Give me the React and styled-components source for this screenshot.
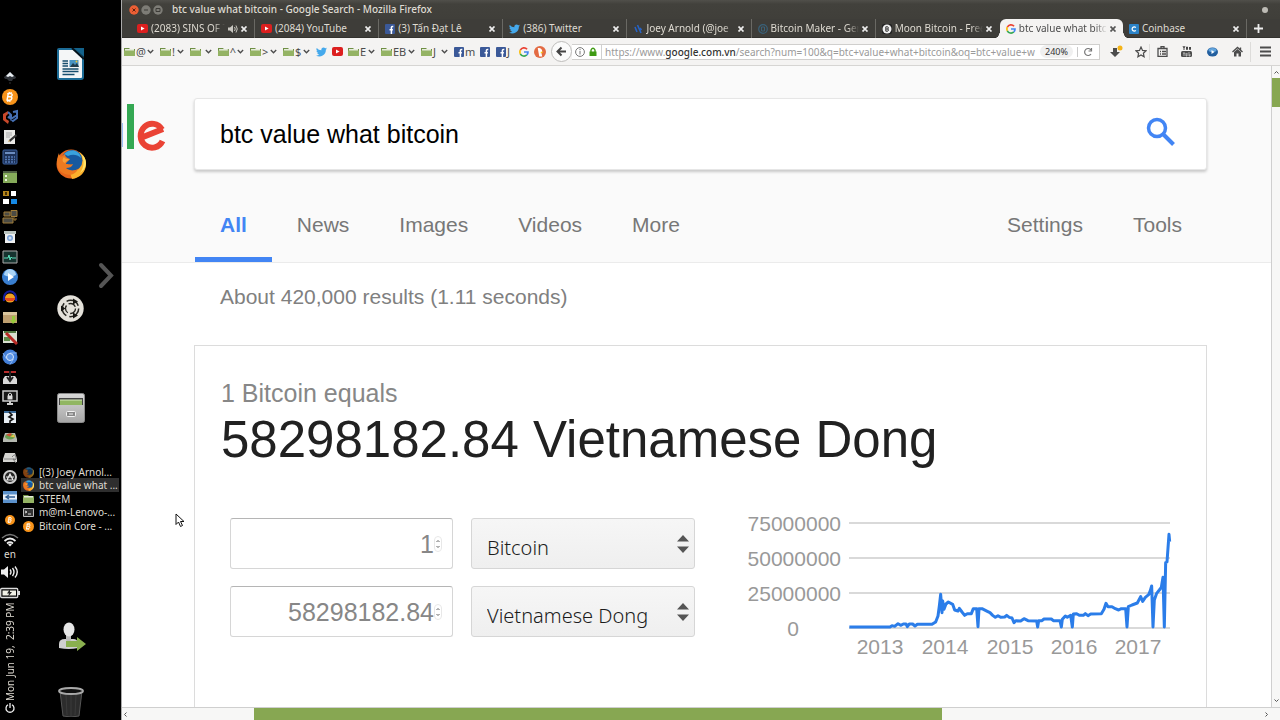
import React from "react";
import styled, { createGlobalStyle, css } from "styled-components";

const GlobalStyle = createGlobalStyle`
  * { box-sizing: border-box; }
  html, body { margin: 0; background: #000; }
  body { font-family: "Liberation Sans", Arial, sans-serif; }
  button { border: 0; background: none; padding: 0; font: inherit; color: inherit; }
  a { color: inherit; text-decoration: none; }
`;

const uiFont = `"Noto Sans", "Open Sans", sans-serif`;

/* ---------- desktop ---------- */

const Desktop = styled.div`
  position: relative;
  display: grid;
  grid-template-columns: 21px 100px minmax(0, 1fr);
  grid-template-rows: minmax(0, 1fr);
  height: 100vh;
  overflow: hidden;
  background: #000;
  color: #dfdbd2;
`;

const Tray = styled.aside`
  display: flex;
  flex-direction: column;
  align-items: flex-start;
  min-height: 0;
  padding-top: 67px;
  font-family: ${uiFont};
  font-size: 10px;
`;

const TrayButton = styled.button`
  flex: none;
  display: flex;
  align-items: center;
  justify-content: center;
  width: 20px;
  height: ${(p) => p.$height || 20}px;
`;

const Clock = styled.time`
  writing-mode: vertical-rl;
  transform: rotate(180deg);
  width: 20px;
  height: 98px;
  text-align: center;
  line-height: 20px;
  white-space: pre;
`;

const Dock = styled.nav`
  display: flex;
  flex-direction: column;
  min-height: 0;
  padding-top: 14px;
`;

const Launcher = styled.button`
  flex: none;
  position: relative;
  display: flex;
  align-items: center;
  justify-content: center;
  width: 99px;
  height: ${(p) => p.$height || 100}px;
  margin-top: ${(p) => p.$above || 0}px;
`;

const DockArrow = styled.svg`
  position: absolute;
  right: 6px;
  top: 4px;
`;

const TaskList = styled.ul`
  list-style: none;
  margin: 7px 2px 71px 0;
  padding: 0;
`;

const Task = styled.li`
  display: flex;
  align-items: center;
  gap: 5px;
  height: 14px;
  margin-bottom: ${(p) => (p.$tight ? -1 : 0)}px;
  padding-left: 2px;
  background: ${(p) => (p.$active ? "#2e2e2e" : "transparent")};
  font: 10px/13px ${uiFont};
  white-space: nowrap;
`;

/* ---------- browser chrome ---------- */

const Browser = styled.main`
  display: flex;
  flex-direction: column;
  min-width: 0;
  min-height: 0;
  border-left: 1px solid #aaa;
  background: #fff;
`;

const TitleBar = styled.header`
  flex: none;
  display: flex;
  align-items: center;
  height: 19px;
  padding: 0 12px 0 7px;
  background: linear-gradient(#504f4a, #42413c 4px, #403f3a);
  color: #dfdbd2;
  font: 10px/19px ${uiFont};
`;

const WindowButtons = styled.div`
  display: flex;
  gap: 2px;
  margin-right: 9px;
`;

const WindowButton = styled.button`
  display: flex;
  width: 10px;
  height: 10px;
`;

const WindowTitle = styled.h1`
  flex: 1;
  margin: 0;
  font: inherit;
  font-weight: 500;
`;

const StatusDot = styled.span`
  width: 6px;
  height: 6px;
  border-radius: 50%;
  background: #bdbbb5;
`;

const TabStrip = styled.div`
  flex: none;
  display: flex;
  height: 19px;
  padding-left: 9px;
  background: #3e3d39;
  border-bottom: 1px solid #33322e;
  font: 10px/19px ${uiFont};
  color: #dfdbd2;
`;

const Tab = styled.div`
  position: relative;
  flex: 1 1 0;
  min-width: 0;
  display: flex;
  align-items: center;
  gap: 3px;
  height: 19px;
  padding: 0 5px 0 6px;
  border-right: 1px solid ${(p) => (p.$divider ? "#6a6964" : "transparent")};
  ${(p) =>
    p.$active &&
    css`
      background: #f4f3f2;
      color: #4c4c4c;
      border-radius: 6px 6px 0 0;
      border-right: 0;
      &::before,
      &::after {
        content: "";
        position: absolute;
        bottom: 0;
        width: 5px;
        height: 8px;
      }
      &::before {
        left: -5px;
        background: radial-gradient(ellipse at 0 0, transparent 68%, #f4f3f2 72%);
      }
      &::after {
        right: -5px;
        background: radial-gradient(ellipse at 100% 0, transparent 68%, #f4f3f2 72%);
      }
    `}
`;

const TabTitle = styled.span`
  flex: 1;
  min-width: 0;
  overflow: hidden;
  white-space: nowrap;
  mask-image: ${(p) =>
    p.$fade ? "linear-gradient(90deg, #000 calc(100% - 12px), transparent)" : "none"};
`;

const NewTab = styled.button`
  flex: none;
  display: flex;
  align-items: center;
  justify-content: center;
  width: 33px;
  padding-right: 10px;
`;

const Toolbar = styled.div`
  flex: none;
  display: flex;
  align-items: center;
  height: 28px;
  padding-left: 2px;
  background: #f4f3f2;
  border-bottom: 1px solid #d6d5d3;
  color: #4c4c4c;
  font: 11px/16px ${uiFont};
`;

const Bookmark = styled.button`
  flex: none;
  display: flex;
  align-items: center;
  gap: 1px;
  width: ${(p) => p.$width}px;
  height: 20px;
`;

const BookmarkArrow = styled.svg`
  margin-left: auto;
  margin-right: 6px;
`;

const Back = styled.button`
  flex: none;
  display: flex;
  align-items: center;
  justify-content: center;
  width: 21px;
  height: 21px;
  margin-left: 1px;
  border: 1px solid #bdbcba;
  border-radius: 50%;
  background: #fbfbfb;
`;

const UrlBar = styled.div`
  flex: 1;
  min-width: 0;
  display: flex;
  align-items: center;
  gap: 4px;
  height: 16px;
  padding: 0 5px 0 3px;
  border: 1px solid #d0cfcd;
  border-left: 0;
  background: #fff;
`;

const UrlText = styled.a`
  flex: 1;
  min-width: 0;
  overflow: hidden;
  white-space: nowrap;
  font-size: 10px;
  line-height: 14px;
  color: #9a9a9a;
  border-left: 1px solid #d0d0d0;
  padding-left: 3px;
  b { color: #333; font-weight: 500; }
`;

const ZoomLevel = styled.button`
  flex: none;
  width: 33px;
  border-radius: 7px;
  background: #f0f0f0;
  color: #333;
  font-size: 9px;
  line-height: 13px;
`;

const Divider = styled.span`
  flex: none;
  width: 1px;
  height: 10px;
  background: #c9c9c9;
`;

const Tools = styled.div`
  flex: none;
  display: grid;
  grid-template-columns: 32px 17px 25px 26px 24px 26px 30px;
  width: 180px;
`;

const ToolButton = styled.button`
  display: flex;
  align-items: center;
  justify-content: center;
  height: ${(p) => (p.$tall ? 20 : 16)}px;
  align-self: center;
  border-left: ${(p) => (p.$divided ? "1px solid #dddcda" : "0")};
`;

/* ---------- page area ---------- */

const Viewport = styled.div`
  flex: 1;
  min-height: 0;
  display: grid;
  grid-template-columns: minmax(0, 1fr) 9px;
  grid-template-rows: minmax(0, 1fr) 13px;
`;

const Page = styled.div`
  overflow: hidden;
  background: #fff;
`;

const VScroll = styled.div`
  display: flex;
  flex-direction: column;
  align-items: center;
  border-left: 1px solid #cfcfcf;
  background: #f7f7f6;
  padding: 4px 0;
`;

const HScroll = styled.div`
  grid-column: 1 / -1;
  display: flex;
  align-items: center;
  border-top: 1px solid #cfcfcf;
  background: #f7f7f6;
  padding: 0 11px 0 1px;
`;

const VThumb = styled.span`
  width: 100%;
  height: 29px;
  margin: 3px 0 auto;
  background: #87a752;
`;

const HThumb = styled.span`
  width: 60%;
  height: 100%;
  margin-left: 11%;
  margin-right: auto;
  background: #87a752;
`;

const PageHeader = styled.div`
  background: #fafafa;
  border-bottom: 1px solid #ebebeb;
  padding-top: 32px;
`;

const SearchRow = styled.div`
  display: grid;
  grid-template-columns: 72px minmax(0, 1fr);
  margin-right: 64px;
`;

const SearchBox = styled.form`
  display: flex;
  align-items: center;
  height: 72px;
  padding: 0 30px 0 25px;
  border: 1px solid #e6e6e6;
  border-radius: 3px;
  background: #fff;
  box-shadow: 0 2px 3px rgba(0, 0, 0, 0.2);
`;

const SearchInput = styled.input`
  flex: 1;
  min-width: 0;
  border: 0;
  outline: 0;
  padding: 0;
  background: none;
  color: #000;
  font: 25px/32px "Liberation Sans", Arial, sans-serif;
`;

const SearchTabs = styled.nav`
  display: flex;
  height: 92px;
  margin: 0 64px 0 73px;
  padding-top: 41px;
`;

const SearchTab = styled.a`
  height: 51px;
  padding: 0 25px;
  font-size: 21px;
  line-height: 28px;
  color: ${(p) => (p.$active ? "#4285f4" : "#777")};
  font-weight: ${(p) => (p.$active ? "bold" : "normal")};
  border-bottom: ${(p) => (p.$active ? "5px solid #4285f4" : "0")};
  margin-left: ${(p) => (p.$push ? "auto" : "0")};
`;

const Stats = styled.p`
  margin: 20px 0 34px 98px;
  font-size: 21px;
  line-height: 28px;
  color: #808080;
`;

const Card = styled.section`
  margin: 0 64px 0 72px;
  min-height: 420px;
  padding: 31px 15px 0 26px;
  border: 1px solid #dcdcdc;
`;

const CardLead = styled.p`
  margin: 0;
  font-size: 25px;
  line-height: 33px;
  color: #878787;
`;

const CardResult = styled.h2`
  margin: 0;
  font-size: 51px;
  line-height: 60px;
  font-weight: normal;
  color: #212121;
`;

const Converter = styled.div`
  display: grid;
  grid-template-columns: 465px minmax(0, 1fr);
  column-gap: 35px;
  margin: 30px 0 0 9px;
`;

const Fields = styled.div`
  display: grid;
  grid-template-columns: 223px 224px;
  grid-auto-rows: 51px;
  gap: 17px 18px;
  align-content: start;
  margin-top: 18px;
`;

const Field = styled.label`
  display: flex;
  align-items: center;
  min-width: 0;
  border: 1px solid #d6d6d6;
  border-radius: 3px;
  ${(p) =>
    p.$select
      ? css`
          padding: 0 4px 0 0;
          background: linear-gradient(#f6f6f6, #efefef);
        `
      : css`
          padding: 0 10px 0 12px;
          border-top-color: #b5b5b5;
          background: #fff;
        `}
`;

const Amount = styled.input`
  flex: 1;
  min-width: 0;
  border: 0;
  outline: 0;
  padding: 0;
  background: none;
  text-align: right;
  color: #878787;
  font: 25px/32px "Liberation Sans", Arial, sans-serif;
`;

const Currency = styled.select`
  flex: 1;
  min-width: 0;
  height: 49px;
  appearance: none;
  border: 0;
  outline: 0;
  padding: 8px 0 0 15px;
  background: none;
  color: #1c1c1c;
  font: 300 20px/32px ${uiFont};
`;

const Chart = styled.svg`
  display: block;
  width: 100%;
  max-width: 460px;
  height: auto;
  text {
    font-family: "Liberation Sans", Arial, sans-serif;
    font-size: 21px;
    fill: #999;
  }
`;

const Cursor = styled.svg`
  position: absolute;
  left: 175px;
  top: 513px;
`;

/* ---------- icons ---------- */

const Svg = ({ s = 16, w, h, vb = "0 0 16 16", children }) => (
  <svg width={w || s} height={h || s} viewBox={vb} fill="none" aria-hidden="true">
    {children}
  </svg>
);

const BitcoinIcon = ({ s = 16 }) => (
  <Svg s={s}>
    <circle cx="8" cy="8" r="8" fill="#f7931a" />
    <path d="M6.3 4.5 5 11.3M5.2 4.6h3.4c2.4 0 2.1 3.2-.6 3.1H6M8 7.7c3 0 2.1 3.6-.8 3.5H4.4M7.4 3l-.3 1.5M9.2 3.2 9 4.6M6 11.2l-.3 1.6M8 11.2l-.3 1.6" stroke="#fff" strokeWidth="1.4" />
  </Svg>
);

const FirefoxIcon = ({ s = 11, dim }) => (
  <Svg s={s} vb="0 0 30 30">
    <g opacity={dim ? 0.55 : 1}>
      <circle cx="15" cy="15" r="14.5" fill="#e8651b" />
      <path d="M16 30c8-1 14-7 14-15 0-6-3-10-7-12l2 8-2 9-9 4z" fill="#fbb02c" />
      <path d="M25 5c4 6 3 14-1 19 5-3 6-8 6-10 0-4-2-7-5-9z" fill="#ffe56a" />
      <circle cx="16" cy="11.5" r="10.5" fill="#17599f" />
      <path d="M8 5C14-1 24 1 25 9c-4-4-9-4-13-2z" fill="#3aa2dd" />
      <path d="M3 4c0 2 1 3 2 4l4-3c0 3 2 4 5 5-1 2-4 3-4 5 3 0 5 1 7 0-1 3-4 4-7 4 3 3 9 3 12 1-2 5-8 7-13 5-6-2-8-7-8-12 0-4 1-6 2-9z" fill="#ee7a20" />
      <path d="M8 8c1 2 3 2 5 2-1 2-3 2-4 4-3-1-3-4-1-6z" fill="#f6a13a" />
    </g>
  </Svg>
);

const FolderIcon = () => (
  <Svg w={11} h={10} vb="0 0 11 10">
    <path d="M0 1h5l1 1h5v7H0z" fill="#6f8f45" />
    <path d="M1 2h9v2H1z" fill="#e6ecdb" />
    <path d="M0 3.500h11V9H0z" fill="#94b364" />
  </Svg>
);

const YouTubeIcon = () => (
  <Svg w={11} h={9} vb="0 0 11 9">
    <rect width="11" height="9" rx="2" fill="#dc1f1f" />
    <path d="M4 2.4 7.6 4.5 4 6.6z" fill="#fff" />
  </Svg>
);

const TwitterIcon = () => (
  <Svg w={11} h={10} vb="0 0 24 20">
    <path d="M24 2.4a10 10 0 0 1-2.8.8A5 5 0 0 0 23.300.5a10 10 0 0 1-3.100 1.200 4.900 4.900 0 0 0-8.400 4.500A14 14 0 0 1 1.700 1a4.900 4.900 0 0 0 1.500 6.600A5 5 0 0 1 1 7v.1a4.900 4.900 0 0 0 3.900 4.800 5 5 0 0 1-2.200.1 4.900 4.900 0 0 0 4.600 3.400A10 10 0 0 1 0 17.500 14 14 0 0 0 21.500 5z" fill="#45a9ec" />
  </Svg>
);

const FacebookIcon = () => (
  <Svg s={10} vb="0 0 10 10">
    <rect width="10" height="10" rx="1" fill="#3b5998" />
    <path d="M6.400 10V5.800h1.500M6.400 6V3.600c0-1 .6-1.300 1.900-1.200M4.500 5.800h2" stroke="#fff" strokeWidth="1.500" />
  </Svg>
);

const GoogleIcon = () => (
  <Svg s={10} vb="0 0 18 18">
    <path d="M14.500 4A7.300 7.300 0 0 0 2.400 5.800" stroke="#ea4335" strokeWidth="3" />
    <path d="M2.400 5.800a7.300 7.300 0 0 0 0 6.400" stroke="#fbbc05" strokeWidth="3" />
    <path d="M2.400 12.200A7.300 7.300 0 0 0 14 14.300" stroke="#34a853" strokeWidth="3" />
    <path d="M14 14.300A7 7 0 0 0 16.200 9H9" stroke="#4285f4" strokeWidth="3" />
  </Svg>
);

const DuckIcon = () => (
  <Svg s={12}>
    <circle cx="8" cy="8" r="8" fill="#e36b43" />
    <path d="M5 3c3-1 6 1 6 4l-1 3 1 4H7z" fill="#fff" />
    <path d="M9 7.500h4L9 10z" fill="#fdd20a" />
  </Svg>
);

const SteemIcon = () => (
  <Svg s={10} vb="0 0 10 10">
    <path d="m2 3 2 5M4.500 1 8 9M7 4l1.500 2" stroke="#2763c4" strokeWidth="1.600" />
  </Svg>
);

const MakerIcon = () => (
  <Svg s={10} vb="0 0 10 10">
    <circle cx="5" cy="5" r="4.300" stroke="#3a6179" strokeWidth="1.200" />
    <path d="M3.500 3h3v4h-3z" stroke="#3a6179" />
  </Svg>
);

const MoonIcon = () => (
  <Svg s={10} vb="0 0 10 10">
    <rect width="10" height="10" rx="2" fill="#222" />
    <circle cx="5" cy="5" r="4.500" fill="#f1f1f1" />
    <path d="M3.800 2.800h2q1.200 1.100 0 2.200 1.500 1 0 2.200h-2zM4 5h2" stroke="#333" />
  </Svg>
);

const CoinbaseIcon = () => (
  <Svg s={10} vb="0 0 10 10">
    <rect width="10" height="10" rx="1" fill="#2b83c8" />
    <path d="M6.800 3.600a2.100 2.100 0 1 0 0 2.800" stroke="#fff" strokeWidth="1.200" />
  </Svg>
);

const SpeakerIcon = () => (
  <Svg s={10} vb="0 0 10 10">
    <path d="M0 3.500h2L5 1v8L2 6.500H0z" fill="#c9c7c1" />
    <path d="M6.500 3q1.500 2 0 4M8 1.500q2.500 3.500 0 7" stroke="#c9c7c1" />
  </Svg>
);

const CloseIcon = ({ color = "#eee" }) => (
  <Svg w={8} h={6} vb="0 0 8 6">
    <path d="m.5.500 5 5m0-5-5 5" stroke={color} strokeWidth="1.700" />
  </Svg>
);

const trayIcons = [
  ["Inkscape", <Svg><path d="M8 3 14 8q0 2-3 2l-1 2H7l-2-2Q2 10 2 8z" fill="#30343a" /><path d="m8 3 4 4-2 1-2-1-2 1-2-1z" fill="#e8eef2" /><path d="M7 14h2" stroke="#333" /></Svg>],
  ["Bitcoin", <BitcoinIcon />],
  ["VirtualBox", <Svg><path d="m1 5 5-3v3L4 7v3l3 2-1 3-5-4z" fill="#c8482a" /><path d="m6 3 3 3v4l6-4V2l-4 1M7 8l4 4 4-3V6M9 6l-3 3" stroke="#456fb2" strokeWidth="2" /></Svg>],
  ["Text Editor", <Svg><path d="M2 1h11v14H2z" fill="#e9e9e6" /><path d="M4 4h6M4 6h6M4 8h4" stroke="#aaa" /><path d="m7 11 7-6 1 2-7 6z" fill="#333" /><path d="m6 13 1-2 1 1z" fill="#c94" /></Svg>],
  ["Calculator", <Svg><rect x="1" y="1" width="14" height="14" rx="1" fill="#1d3157" stroke="#3c62a2" /><path d="M3 4h10" stroke="#6c8dc0" strokeWidth="2" /><path d="M3 8h10M3 10.500h10M3 13h10" stroke="#557bb8" strokeDasharray="2 1" strokeWidth="1.500" /></Svg>],
  ["Panel", <Svg><path d="M1 2h14v12H1z" fill="#85ab5a" /><path d="M1 2h14v2H1z" fill="#4e5f42" /><path d="M3 6h2v2H3zM3 10h2v2H3z" fill="#e9f3dc" /></Svg>],
  ["Workspace grid", <Svg><path d="M1 2h6v5H1z" fill="#b3841b" /><path d="M3 3h2v3H3z" fill="#4b3406" /><path d="M9 2h5v5H9zM1 10h6v5H1z" fill="#fff" /><path d="M9 10h6v5H9z" fill="#1589e6" /></Svg>],
  ["Windows", <Svg><path d="M2 3h6v4H2zM9 1.500h6v6H9zM1 9h10v5H1z" fill="#4b4b44" stroke="#a07d38" /><path d="M12 8v3M12 11h2V9" stroke="#a07d38" /></Svg>],
  ["Camera", <Svg><path d="M2 2h12v3H2z" fill="#b9c3bf" /><path d="M3 5h10v9H3z" fill="#eef0f1" /><circle cx="8" cy="9" r="3" fill="#7aa2d8" /><circle cx="8" cy="9" r="1.500" fill="#d2e2f4" /></Svg>],
  ["System Monitor", <Svg><path d="M1 2h14v12H1z" fill="#16332f" stroke="#aaa" /><path d="M2 9h4l1-3 1 5 1-3 1 1h4" stroke="#5ae0bb" /></Svg>],
  ["Player", <Svg><circle cx="8" cy="8" r="8" fill="#3a7fd0" /><path d="M2 6a6 6 0 0 1 12 0q-6 3-12 0z" fill="#a9d3f6" /><path d="m6 4 6 4-6 4z" fill="#fff" /></Svg>],
  ["Audacity", <Svg><path d="M2 12C0-1 16-1 14 12" stroke="#151d9a" strokeWidth="2" /><ellipse cx="8" cy="9" rx="5" ry="4.500" fill="#f0a020" /><path d="M3 9h10v1l-2 2H5l-2-2z" fill="#e9471d" /></Svg>],
  ["Package", <Svg><path d="M1 3h14v11H1z" fill="#bfa071" /><path d="M1 3h14v3H1z" fill="#dac69e" /><path d="M10 7h3v4h2l-4 4-3-4h2z" fill="#98c93c" /></Svg>],
  ["Tweak", <Svg><path d="M1 2h14v12H1z" fill="#d9dfd0" /><path d="M2 8h6v4H2z" fill="#5d8a48" /><path d="M2 3h12" stroke="#537a43" strokeWidth="2" /><path d="m4 4 11 11" stroke="#b82a24" strokeWidth="3" /></Svg>],
  ["Chromium", <Svg><circle cx="8" cy="8" r="7.500" fill="#437fd8" /><path d="M8 4h7M4.500 10 1 4M11.500 10 8 15.500" stroke="#8ab6f2" /><circle cx="8" cy="8" r="3.500" fill="#6299e8" stroke="#d9e8fb" /></Svg>],
  ["Downloader", <Svg><path d="m3 7-2 3v5h14v-5l-2-3z" fill="#d8d8d8" /><path d="M2 2h12v2H2z" fill="#b72d2d" /><path d="M8 2v9m-3-3 3 4 3-4" stroke="#222" strokeWidth="2" /></Svg>],
  ["Lock Screen", <Svg><path d="M1 2h14v10H1z" fill="#191919" stroke="#ccc" strokeWidth="1.500" /><path d="M5 15h6M8 12v3" stroke="#ccc" strokeWidth="2" /><path d="M5.500 6.500h5v4h-5z" fill="#ddd" /><path d="M6.500 7V5q1.500-2 3 0v2" stroke="#ddd" /></Svg>],
  ["Diff", <Svg><path d="M2 2h12v12H2z" fill="#e8eef3" /><path d="M2 2h12v2H2z" fill="#3c6a96" /><path d="m7 3 3 3-3 2 4 2-3 2v3" stroke="#111" strokeWidth="1.600" /></Svg>],
  ["Disk Usage", <Svg><path d="m3 4-2 6v3h14v-3l-2-6z" fill="#b5b8b1" /><ellipse cx="8" cy="7.500" rx="5" ry="3" fill="#69a051" /><path d="M8 7.500 4 6q4-3 6-1z" fill="#cd4b35" /><path d="m8 7.500 4-2 1 3z" fill="#e9c645" /></Svg>],
  ["Disks", <Svg><path d="m3 4-2 6v3h14v-3l-2-6z" fill="#d4d4d1" /><path d="M2 10h12" stroke="#888" /><path d="M10 8q3-4 4 0t-3 2l3 4" stroke="#777" /></Svg>],
  ["Software Updater", <Svg><circle cx="8" cy="8" r="6" fill="#242424" stroke="#ccc" strokeWidth="2" /><path d="m5 11 3-6 3 6zM4 8h8" stroke="#eee" strokeWidth="1.200" /></Svg>],
  ["Remote", <Svg><path d="M1 2h14v12H1z" fill="#5b91cb" /><path d="M1 5.500h14v5H1z" fill="#e7eff8" /><path d="M13 8H4m3-2L4 8l3 2" stroke="#315e93" strokeWidth="1.500" /></Svg>],
];

const bookmarks = [
  [36, <FolderIcon />, "@", 1],
  [30, <FolderIcon />, "!", 1],
  [28, <FolderIcon />, "", 1],
  [32, <FolderIcon />, "^", 1],
  [33, <FolderIcon />, ">", 1],
  [33, <FolderIcon />, "$", 1],
  [16, <TwitterIcon />, "", 0],
  [16, <YouTubeIcon />, "", 0],
  [33, <FolderIcon />, "E", 1],
  [40, <FolderIcon />, "EB", 1],
  [33, <FolderIcon />, "J", 1],
  [26, <FacebookIcon />, "m", 0],
  [16, <FacebookIcon />, "", 0],
  [23, <FacebookIcon />, "J", 0],
  [15, <GoogleIcon />, "", 0],
  [16, <DuckIcon />, "", 0],
];

const tabs = [
  { icon: <YouTubeIcon />, title: "(2083) SINS OF T", fade: true, sound: true, divider: true },
  { icon: <YouTubeIcon />, title: "(2084) YouTube", divider: true },
  { icon: <FacebookIcon />, title: "(3) Tấn Đạt Lê", divider: true },
  { icon: <TwitterIcon />, title: "(386) Twitter", divider: true },
  { icon: <SteemIcon />, title: "Joey Arnold (@joe", fade: true, divider: true },
  { icon: <MakerIcon />, title: "Bitcoin Maker - Ger", fade: true, divider: true },
  { icon: <MoonIcon />, title: "Moon Bitcoin - Free", fade: true },
  { icon: <GoogleIcon />, title: "btc value what bitc", fade: true, active: true },
  { icon: <CoinbaseIcon />, title: "Coinbase", divider: true },
];

const tasks = [
  [<FirefoxIcon dim />, "[(3) Joey Arnol..."],
  [<FirefoxIcon />, "btc value what ..."],
  [<FolderIcon />, "STEEM"],
  [<Svg w={11} h={9} vb="0 0 11 9"><path d="M.5.500h10v8H.5z" fill="#333" stroke="#bbb" /><path d="m2 3 2 1-2 1M5 6h3" stroke="#ddd" /></Svg>, "m@m-Lenovo-..."],
  [<BitcoinIcon s={11} />, "Bitcoin Core - ..."],
];

const tools = [
  ["Downloads", <Svg w={14} h={14} vb="0 0 14 14"><path d="M4 3h4v4h3l-5 5-5-5h3z" fill="#4c4c4c" /><circle cx="11" cy="3" r="2.500" fill="#f5b417" /></Svg>],
  ["Bookmark this page", <Svg s={12} vb="0 0 12 12"><path d="m6 1 1.500 3.400 3.500.400-2.600 2.400.700 3.600L6 9l-3.100 1.800.700-3.600L1 4.800l3.500-.4z" stroke="#4c4c4c" strokeWidth="1.200" /></Svg>],
  ["Bookmarks list", <Svg s={11} vb="0 0 11 11"><path d="M1 2.500h9v8H1zM3 5.500h1M5 5.500h4M3 8h1M5 8h4M4 2V.5h3V2" stroke="#4c4c4c" strokeWidth="1.300" /></Svg>],
  ["YouTube download", <Svg w={12} h={12} vb="0 0 12 12"><path d="m2 0 1 2 1-2M3 2v2M5.500 1h1v2.500h-1zM8.500 1v2.500h1V1" stroke="#333" strokeWidth=".9" /><rect y="5" width="11" height="6" rx="1.500" fill="#4c4c4c" /><path d="M2 7h2M3 7v3M5 7v3h1V7M8 6v4h1V8" stroke="#ddd" strokeWidth=".7" /></Svg>],
  ["Media player", <Svg w={11} h={10} vb="0 0 11 10"><ellipse cx="5.500" cy="5" rx="5.500" ry="4.500" fill="#235f9f" /><ellipse cx="5.500" cy="3" rx="4" ry="2" fill="#63a4dc" /><path d="m4.500 3 3 2-3 2z" fill="#fff" /></Svg>],
  ["Home", <Svg s={11} vb="0 0 11 11"><path d="m.5 6 5-4.500 5 4.500M8.500 1.500v3" stroke="#4c4c4c" strokeWidth="1.400" /><path d="m2 6 3.500-3L9 6v4.500H6.500v-3h-2v3H2z" fill="#4c4c4c" /></Svg>],
  ["Menu", <Svg s={11} vb="0 0 11 11"><path d="M0 1.500h11M0 5.500h11M0 9.500h11" stroke="#4c4c4c" strokeWidth="1.800" /></Svg>],
];

const Arrow = ({ d }) => (
  <Svg s={5} vb="0 0 5 5">
    <path d={d} stroke="#555" />
  </Svg>
);

const Updown = () => (
  <Svg w={14} h={18} vb="0 0 14 18">
    <path d="m7 0 6 6.500H1zM7 18l6-6.500H1z" fill="#555" />
  </Svg>
);

const Spinner = () => (
  <Svg w={8} h={16} vb="0 0 8 16">
    <rect x=".5" y=".5" width="7" height="15" rx="3.500" stroke="#e8e8e8" />
    <path d="m2.500 6 1.500-1.500L5.500 6M2.500 10 4 11.500 5.500 10" stroke="#666" />
  </Svg>
);

const priceLine =
  "358,381 480,381 486,377 494,379 504,371 512,376 520,372 528,372 532,380 538,372 548,372 555,378 562,373 606,373 617,366 624,348 628,318 632,283 636,338 638,303 642,328 648,312 655,306 668,313 674,330 684,333 688,325 696,336 704,346 712,341 724,341 730,326 740,326 744,380 747,326 756,326 772,334 780,338 788,346 796,352 804,347 812,352 824,351 830,346 838,352 846,354 852,368 858,362 872,363 882,356 894,362 920,363 923,381 926,362 936,362 942,357 964,357 970,362 990,362 994,381 997,358 1006,348 1012,352 1022,346 1027,381 1030,342 1040,341 1048,346 1060,346 1066,341 1074,347 1082,342 1114,341 1122,328 1128,310 1134,320 1146,320 1156,326 1166,330 1174,326 1187,326 1191,381 1195,320 1206,315 1222,309 1232,290 1238,304 1246,292 1256,284 1261,272 1265,258 1269,381 1273,300 1280,280 1288,270 1294,262 1299,232 1303,381 1307,188 1311,186 1317,103 1319,125";

const yLabels = [["75000000", 31], ["50000000", 66], ["25000000", 101]];
const years = [["2013", 150], ["2014", 215], ["2015", 280], ["2016", 344], ["2017", 408]];

function PriceChart() {
  return (
    <Chart viewBox="0 0 460 170" role="img" aria-label="Bitcoin price in Vietnamese Dong">
      {[23, 58, 93, 128].map((y) => (
        <path key={y} d={`M119 ${y}H440`} stroke="#ccc" strokeWidth="1.500" />
      ))}
      {yLabels.map(([label, y]) => (
        <text key={label} x="111" y={y} textAnchor="end">{label}</text>
      ))}
      <text x="63" y="136" textAnchor="middle">0</text>
      {years.map(([label, x]) => (
        <text key={label} x={x} y="154" textAnchor="middle">{label}</text>
      ))}
      <g transform="scale(.33333)">
        <polyline points={priceLine} fill="none" stroke="#2b7de9" strokeWidth="9" strokeLinejoin="round" />
      </g>
    </Chart>
  );
}

/* ---------- sections ---------- */

function SystemTray() {
  return (
    <Tray>
      {trayIcons.map(([label, icon]) => (
        <TrayButton key={label} aria-label={label}>{icon}</TrayButton>
      ))}
      <TrayButton $height={26} aria-label="Bitcoin Core"><BitcoinIcon s={10} /></TrayButton>
      <TrayButton $height={14} aria-label="Network">
        <Svg w={18} h={14} vb="0 0 18 14">
          <path d="M1 5q8-7 16 0" stroke="#777" strokeWidth="1.500" />
          <path d="M3.500 8q5.500-5 11 0M6 10.500q3-2.500 6 0" stroke="#eee" strokeWidth="1.700" />
          <path d="m7 11.500 2-1 2 1-2 2z" fill="#eee" />
        </Svg>
      </TrayButton>
      <TrayButton $height={14}>en</TrayButton>
      <TrayButton $height={22} aria-label="Volume">
        <Svg w={18} h={14} vb="0 0 18 14">
          <path d="M0 4.500h3L7 1v12L3 9.500H0z" fill="#eee" />
          <path d="M9 4.500q2 2.500 0 5M11.500 3q3 4 0 8M14 1.500q4.500 5.500 0 11" stroke="#eee" strokeWidth="1.400" />
        </Svg>
      </TrayButton>
      <TrayButton $height={20} aria-label="Battery">
        <Svg w={20} h={12} vb="0 0 20 12">
          <rect x=".7" y="1.500" width="17" height="9" rx="1" stroke="#ddd" strokeWidth="1.300" />
          <path d="M2.500 3.500h13.500v5H2.500z" fill="#f1f1e6" />
          <path d="M18 4h2v4h-2z" fill="#ddd" />
          <path d="m10 2-3 4.500h2L8 10l4-5h-2z" fill="#222" />
        </Svg>
      </TrayButton>
      <Clock>{"Mon Jun 19,  2:39 PM"}</Clock>
      <TrayButton $height={14} aria-label="Power">
        <Svg s={10} vb="0 0 10 10">
          <path d="M3 1.800a4 4 0 1 0 4 0M5 0v5" stroke="#eee" strokeWidth="1.300" />
        </Svg>
      </TrayButton>
    </Tray>
  );
}

function LauncherDock() {
  return (
    <Dock>
      <Launcher aria-label="Writer">
        <Svg w={27} h={32} vb="0 0 27 32">
          <path d="M2 1h15l9 9v19q0 2-2 2H2q-1 0-1-2V2q0-1 1-1z" fill="#f4f6f7" stroke="#1c6c97" strokeWidth="2" />
          <path d="M17 0h10v9z" fill="#13628b" />
          <path d="M15 0 27 11" stroke="#04121a" strokeWidth="2" />
          <path d="M5.500 13H11M5.500 15.500H11M5.500 18H11M5.500 21h16M5.500 23.500h16M5.500 26.500h12" stroke="#174e6e" strokeWidth="1.300" />
          <path d="M12.500 12h9v7h-9z" fill="#4993c2" />
          <path d="m13 19 3-4 2 2 2-2 2 4z" fill="#233c4b" />
          <circle cx="19.500" cy="13.500" r="1" fill="#f4c430" />
        </Svg>
      </Launcher>
      <Launcher aria-label="Firefox"><FirefoxIcon s={30} /></Launcher>
      <Launcher $above={44} aria-label="Dash">
        <Svg s={27} vb="0 0 27 27">
          <circle cx="13.500" cy="13.500" r="13.200" fill="#e4e1da" />
          <circle cx="13.500" cy="13.500" r="8.200" stroke="#25241f" strokeWidth="1.500" strokeDasharray="14 3.170" />
          <circle cx="13.500" cy="13.500" r="5" stroke="#25241f" strokeWidth="1.300" strokeDasharray="8 2.470" />
          <path d="m4 10.500 4.500 3L4 16.500zM16 3.500l5 3-5 3zM16 17.500l5 3-5 3z" fill="#171613" />
        </Svg>
        <DockArrow width="16" height="27" viewBox="0 0 16 27" fill="none">
          <path d="m3 3 10 10.500L3 24" stroke="#555" strokeWidth="4" strokeLinecap="round" />
        </DockArrow>
      </Launcher>
      <Launcher aria-label="Files">
        <Svg w={28} h={30} vb="0 0 28 30">
          <defs>
            <linearGradient id="cabinet" x1="0" y1="0" x2="0" y2="1">
              <stop offset="0" stopColor="#d8d8d8" />
              <stop offset="1" stopColor="#a6a6a6" />
            </linearGradient>
          </defs>
          <rect x=".5" y=".5" width="27" height="29" rx="2" fill="url(#cabinet)" stroke="#8b8b8b" />
          <path d="M2 5h24v7H2z" fill="#444" />
          <path d="M3 7h22v5H3z" fill="#91b662" />
          <path d="M3 7h22" stroke="#d6e8bb" />
          <rect x="9.500" y="18.500" width="9" height="5" rx="1" fill="#888" stroke="#f2f2f2" />
          <path d="M12 21h4" stroke="#eee" />
        </Svg>
      </Launcher>
      <TaskList>
        {tasks.map(([icon, label], i) => (
          <Task key={label} $active={i === 1} $tight={i % 2 === 0}>{icon}{label}</Task>
        ))}
      </TaskList>
      <Launcher $height={66} aria-label="Switch user">
        <Svg w={30} h={30} vb="0 0 30 30">
          <path d="M3 27v-4q0-5 6-5h8q5 0 5 5v4q-9 2-19 0z" fill="#cfcfcf" />
          <path d="M10 14h5v5q-2 3-5 0z" fill="#bbb" />
          <ellipse cx="13" cy="8.500" rx="5.500" ry="7" fill="#e6e6e6" />
          <path d="M10 20h11v-4l9 7-9 7v-4H10z" fill="#8ab04f" />
        </Svg>
      </Launcher>
      <Launcher $height={66} aria-label="Trash">
        <Svg w={26} h={30} vb="0 0 26 30">
          <path d="m2 4 3 25q8 2 16 0l3-25z" fill="#2c2c2c" stroke="#555" />
          <path d="m8 8 1 20M13 8v21M18 8l-1 20" stroke="#3b3b3b" />
          <ellipse cx="13" cy="4" rx="12" ry="3" fill="#111" stroke="#a9a9a9" strokeWidth="2" />
        </Svg>
      </Launcher>
    </Dock>
  );
}

function BrowserChrome() {
  return (
    <>
      <TitleBar>
        <WindowButtons>
          <WindowButton aria-label="Close window"><Svg s={10} vb="0 0 10 10"><circle cx="5" cy="5" r="4.700" fill="#ec5f34" /><path d="m3.500 3.500 3 3m0-3-3 3" stroke="#5b2010" /></Svg></WindowButton>
          <WindowButton aria-label="Minimize"><Svg s={10} vb="0 0 10 10"><circle cx="5" cy="5" r="4.700" fill="#7d7c76" /><path d="M3 5h4" stroke="#3c3b37" /></Svg></WindowButton>
          <WindowButton aria-label="Maximize"><Svg s={10} vb="0 0 10 10"><circle cx="5" cy="5" r="4.700" fill="#7d7c76" /><path d="M3 3.500h4v3H3z" stroke="#3c3b37" /></Svg></WindowButton>
        </WindowButtons>
        <WindowTitle>btc value what bitcoin - Google Search - Mozilla Firefox</WindowTitle>
        <StatusDot />
      </TitleBar>
      <TabStrip>
        {tabs.map((t) => (
          <Tab key={t.title} $active={t.active} $divider={t.divider}>
            {t.icon}
            <TabTitle $fade={t.fade}>{t.title}</TabTitle>
            {t.sound && <SpeakerIcon />}
            <button aria-label={`Close ${t.title}`}><CloseIcon color={t.active ? "#555" : "#eee"} /></button>
          </Tab>
        ))}
        <NewTab aria-label="New tab">
          <Svg s={9} vb="0 0 9 9"><path d="M0 4.500h9M4.500 0v9" stroke="#eee" strokeWidth="1.800" /></Svg>
        </NewTab>
      </TabStrip>
      <Toolbar>
        {bookmarks.map(([width, icon, label, menu], i) => (
          <Bookmark key={i} $width={width} aria-label={label ? undefined : "Bookmark"}>
            {icon}
            {label}
            {menu ? (
              <BookmarkArrow width="7" height="5" viewBox="0 0 7 5" fill="none">
                <path d="m.8 1 2.700 2.700L6.200 1" stroke="#4c4c4c" strokeWidth="1.400" />
              </BookmarkArrow>
            ) : null}
          </Bookmark>
        ))}
        <Back aria-label="Back">
          <Svg s={11} vb="0 0 11 11"><path d="M10 5.500H2M5.500 1.500l-4 4 4 4" stroke="#444" strokeWidth="2" /></Svg>
        </Back>
        <UrlBar>
          <Svg s={10} vb="0 0 10 10"><circle cx="5" cy="5" r="4.400" stroke="#777" /><path d="M5 4v3.500M5 2v1.200" stroke="#777" /></Svg>
          <Svg w={8} h={10} vb="0 0 8 10"><path d="M.500 4.500h7V9h-7z" fill="#3f9b14" /><path d="M2 5V3q2-3.500 4 0v2" stroke="#3f9b14" strokeWidth="1.400" /></Svg>
          <UrlText href="#">https://www.<b>google.com.vn</b>/search?num=100&amp;q=btc+value+what+bitcoin&amp;oq=btc+value+w</UrlText>
          <ZoomLevel>240%</ZoomLevel>
          <Divider />
          <ToolButton aria-label="Reload">
            <Svg s={12} vb="0 0 12 12"><path d="M9 8A3.500 3.500 0 1 1 9 4M9.500 2v3h-3" stroke="#777" strokeWidth="1.200" /></Svg>
          </ToolButton>
        </UrlBar>
        <Tools>
          {tools.map(([label, icon]) => (
            <ToolButton
              key={label}
              aria-label={label}
              $tall={label === "Menu"}
              $divided={label === "Menu" || label === "Bookmarks list"}
            >
              {icon}
            </ToolButton>
          ))}
        </Tools>
      </Toolbar>
    </>
  );
}

function SearchPage() {
  return (
    <Page>
      <PageHeader>
        <SearchRow>
          <svg width="50" height="72" viewBox="0 0 50 72" fill="none" role="img" aria-label="Google">
            <path d="M0 25v24" stroke="#4285f4" />
            <path d="M5 6h7v45H5z" fill="#34a853" />
            <path d="M18.500 40 41 31M40 31.500A11.500 12 0 1 0 40.500 43" stroke="#ea4335" strokeWidth="6" />
          </svg>
          <SearchBox>
            <SearchInput aria-label="Search" defaultValue="btc value what bitcoin" />
            <button type="button" aria-label="Search">
              <Svg s={30} vb="0 0 30 30">
                <circle cx="11" cy="11" r="8.500" stroke="#4285f4" strokeWidth="3.500" />
                <path d="m17 17 10.500 10.500" stroke="#4285f4" strokeWidth="4" />
              </Svg>
            </button>
          </SearchBox>
        </SearchRow>
        <SearchTabs>
          <SearchTab href="#" $active>All</SearchTab>
          <SearchTab href="#">News</SearchTab>
          <SearchTab href="#">Images</SearchTab>
          <SearchTab href="#">Videos</SearchTab>
          <SearchTab href="#">More</SearchTab>
          <SearchTab href="#" $push>Settings</SearchTab>
          <SearchTab href="#">Tools</SearchTab>
        </SearchTabs>
      </PageHeader>
      <Stats>About 420,000 results (1.11 seconds)</Stats>
      <Card>
        <CardLead>1 Bitcoin equals</CardLead>
        <CardResult>58298182.84 Vietnamese Dong</CardResult>
        <Converter>
          <Fields>
            <Field><Amount aria-label="Bitcoin amount" defaultValue="1" /><Spinner /></Field>
            <Field $select>
              <Currency aria-label="From currency"><option>Bitcoin</option></Currency>
              <Updown />
            </Field>
            <Field><Amount aria-label="Dong amount" defaultValue="58298182.84" /><Spinner /></Field>
            <Field $select>
              <Currency aria-label="To currency"><option>Vietnamese Dong</option></Currency>
              <Updown />
            </Field>
          </Fields>
          <PriceChart />
        </Converter>
      </Card>
    </Page>
  );
}

export default function App() {
  return (
    <>
      <GlobalStyle />
      <Desktop>
        <SystemTray />
        <LauncherDock />
        <Browser>
          <BrowserChrome />
          <Viewport>
            <SearchPage />
            <VScroll>
              <Arrow d="m.5 3.500 2-2 2 2" />
              <VThumb />
              <Arrow d="m.5 1.500 2 2 2-2" />
            </VScroll>
            <HScroll>
              <Arrow d="m3.500.500-2 2 2 2" />
              <HThumb />
              <Arrow d="m1.500.500 2 2-2 2" />
            </HScroll>
          </Viewport>
        </Browser>
        <Cursor width="10" height="15" viewBox="0 0 10 15">
          <path d="M1 1v10.500L3.500 9l2 4.500 2-1L5.500 8.500H9z" fill="#fff" stroke="#111" />
        </Cursor>
      </Desktop>
    </>
  );
}
